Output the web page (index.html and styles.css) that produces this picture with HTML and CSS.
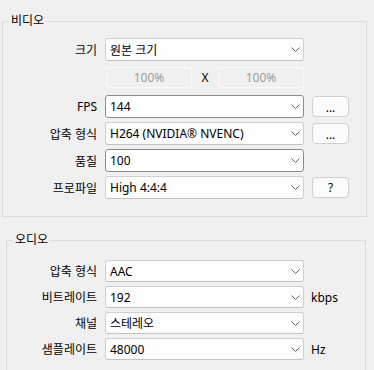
FILE: index.html
```html
<!DOCTYPE html>
<html lang="ko">
<head>
    <meta charset="UTF-8">
    <meta name="viewport" content="width=device-width, initial-scale=1.0">
    <title>출력 설정</title>
    <link rel="stylesheet" href="styles.css">
</head>
<body>
    <fieldset class="group video">
        <legend>비디오</legend>
        <div class="row">
            <label>크기</label>
            <div class="combo"><span>원본 크기</span><svg class="chev" width="9" height="5" viewBox="0 0 9 5"><polyline points="0.5,0.5 4.5,4.5 8.5,0.5"/></svg></div>
        </div>
        <div class="row sub">
            <span></span>
            <div class="ratio">
                <span class="field">100%</span>
                <span class="times">X</span>
                <span class="field">100%</span>
            </div>
        </div>
        <div class="row first">
            <label>FPS</label>
            <div class="combo edit"><span>144</span><svg class="chev" width="9" height="5" viewBox="0 0 9 5"><polyline points="0.5,0.5 4.5,4.5 8.5,0.5"/></svg></div>
            <button class="btn dots">...</button>
        </div>
        <div class="row">
            <label>압축 형식</label>
            <div class="combo"><span>H264 (NVIDIA® NVENC)</span><svg class="chev" width="9" height="5" viewBox="0 0 9 5"><polyline points="0.5,0.5 4.5,4.5 8.5,0.5"/></svg></div>
            <button class="btn dots">...</button>
        </div>
        <div class="row">
            <label>품질</label>
            <div class="combo edit"><span>100</span><svg class="chev" width="9" height="5" viewBox="0 0 9 5"><polyline points="0.5,0.5 4.5,4.5 8.5,0.5"/></svg></div>
        </div>
        <div class="row">
            <label>프로파일</label>
            <div class="combo"><span>High 4:4:4</span><svg class="chev" width="9" height="5" viewBox="0 0 9 5"><polyline points="0.5,0.5 4.5,4.5 8.5,0.5"/></svg></div>
            <button class="btn">?</button>
        </div>
    </fieldset>

    <fieldset class="group audio">
        <legend>오디오</legend>
        <div class="row">
            <label>압축 형식</label>
            <div class="combo"><span>AAC</span><svg class="chev" width="9" height="5" viewBox="0 0 9 5"><polyline points="0.5,0.5 4.5,4.5 8.5,0.5"/></svg></div>
        </div>
        <div class="row">
            <label>비트레이트</label>
            <div class="combo"><span>192</span><svg class="chev" width="9" height="5" viewBox="0 0 9 5"><polyline points="0.5,0.5 4.5,4.5 8.5,0.5"/></svg></div>
            <span class="unit">kbps</span>
        </div>
        <div class="row">
            <label>채널</label>
            <div class="combo"><span>스테레오</span><svg class="chev" width="9" height="5" viewBox="0 0 9 5"><polyline points="0.5,0.5 4.5,4.5 8.5,0.5"/></svg></div>
        </div>
        <div class="row">
            <label>샘플레이트</label>
            <div class="combo"><span>48000</span><svg class="chev" width="9" height="5" viewBox="0 0 9 5"><polyline points="0.5,0.5 4.5,4.5 8.5,0.5"/></svg></div>
            <span class="unit">Hz</span>
        </div>
    </fieldset>
</body>
</html>
```

FILE: styles.css
```css
html, body {
    margin: 0;
    padding: 0;
    background: #f0f0f0;
}
body {
    font-family: 'Noto Sans', 'Noto Sans CJK KR', sans-serif;
    font-size: 12px;
    color: #000;
    overflow: hidden;
}
.group {
    box-sizing: border-box;
    border: 1px solid #dcdcdc;
    min-width: 0;
}
.group legend {
    margin-left: 6px;
    padding: 0 2px;
    line-height: 14px;
    font-size: 12px;
}
.video {
    width: 365px;
    margin: 14px 0 0 2px;
    padding: 10px 0 17px 0;
}
.audio {
    width: 360px;
    margin: 16px 0 0 6px;
    padding: 13px 0 20px 0;
}
.row {
    display: grid;
    grid-template-columns: 94px 199px 37px;
    column-gap: 8px;
    align-items: center;
    height: 23px;
    margin-top: 4px;
}
.row:first-of-type {
    margin-top: 0;
}
.audio .row {
    grid-template-columns: 90px 199px auto;
    height: 22px;
}
.row.sub {
    height: 21px;
    margin-top: 6px;
}
.row.first {
    margin-top: 7px;
}
.row label {
    text-align: right;
    white-space: nowrap;
}
.combo {
    box-sizing: border-box;
    height: 100%;
    display: flex;
    align-items: center;
    justify-content: space-between;
    padding: 0 3px 0 4px;
    background: #fdfdfd;
    border: 1px solid #d0d0d0;
    border-bottom-color: #c2c2c2;
    border-radius: 3px;
    white-space: nowrap;
}
.combo.edit {
    border-color: #8c8c8c;
    background: #fff;
}
.chev polyline {
    fill: none;
    stroke: #606060;
    stroke-width: 1;
}
.ratio {
    display: flex;
    align-items: center;
    height: 100%;
    margin-left: 1px;
}
.field {
    box-sizing: border-box;
    width: 86px;
    height: 100%;
    display: flex;
    align-items: center;
    justify-content: center;
    border: 1px solid #fafafa;
    border-radius: 2px;
    color: #9a9a9a;
}
.times {
    width: 26px;
    text-align: center;
}
.btn {
    box-sizing: border-box;
    height: 21px;
    padding: 0;
    font: inherit;
    color: #000;
    background: #fbfbfb;
    border: 1px solid #d0d0d0;
    border-radius: 4px;
}
.btn.dots {
    padding-top: 1px;
}
.unit {
    margin-left: -1px;
}
```
